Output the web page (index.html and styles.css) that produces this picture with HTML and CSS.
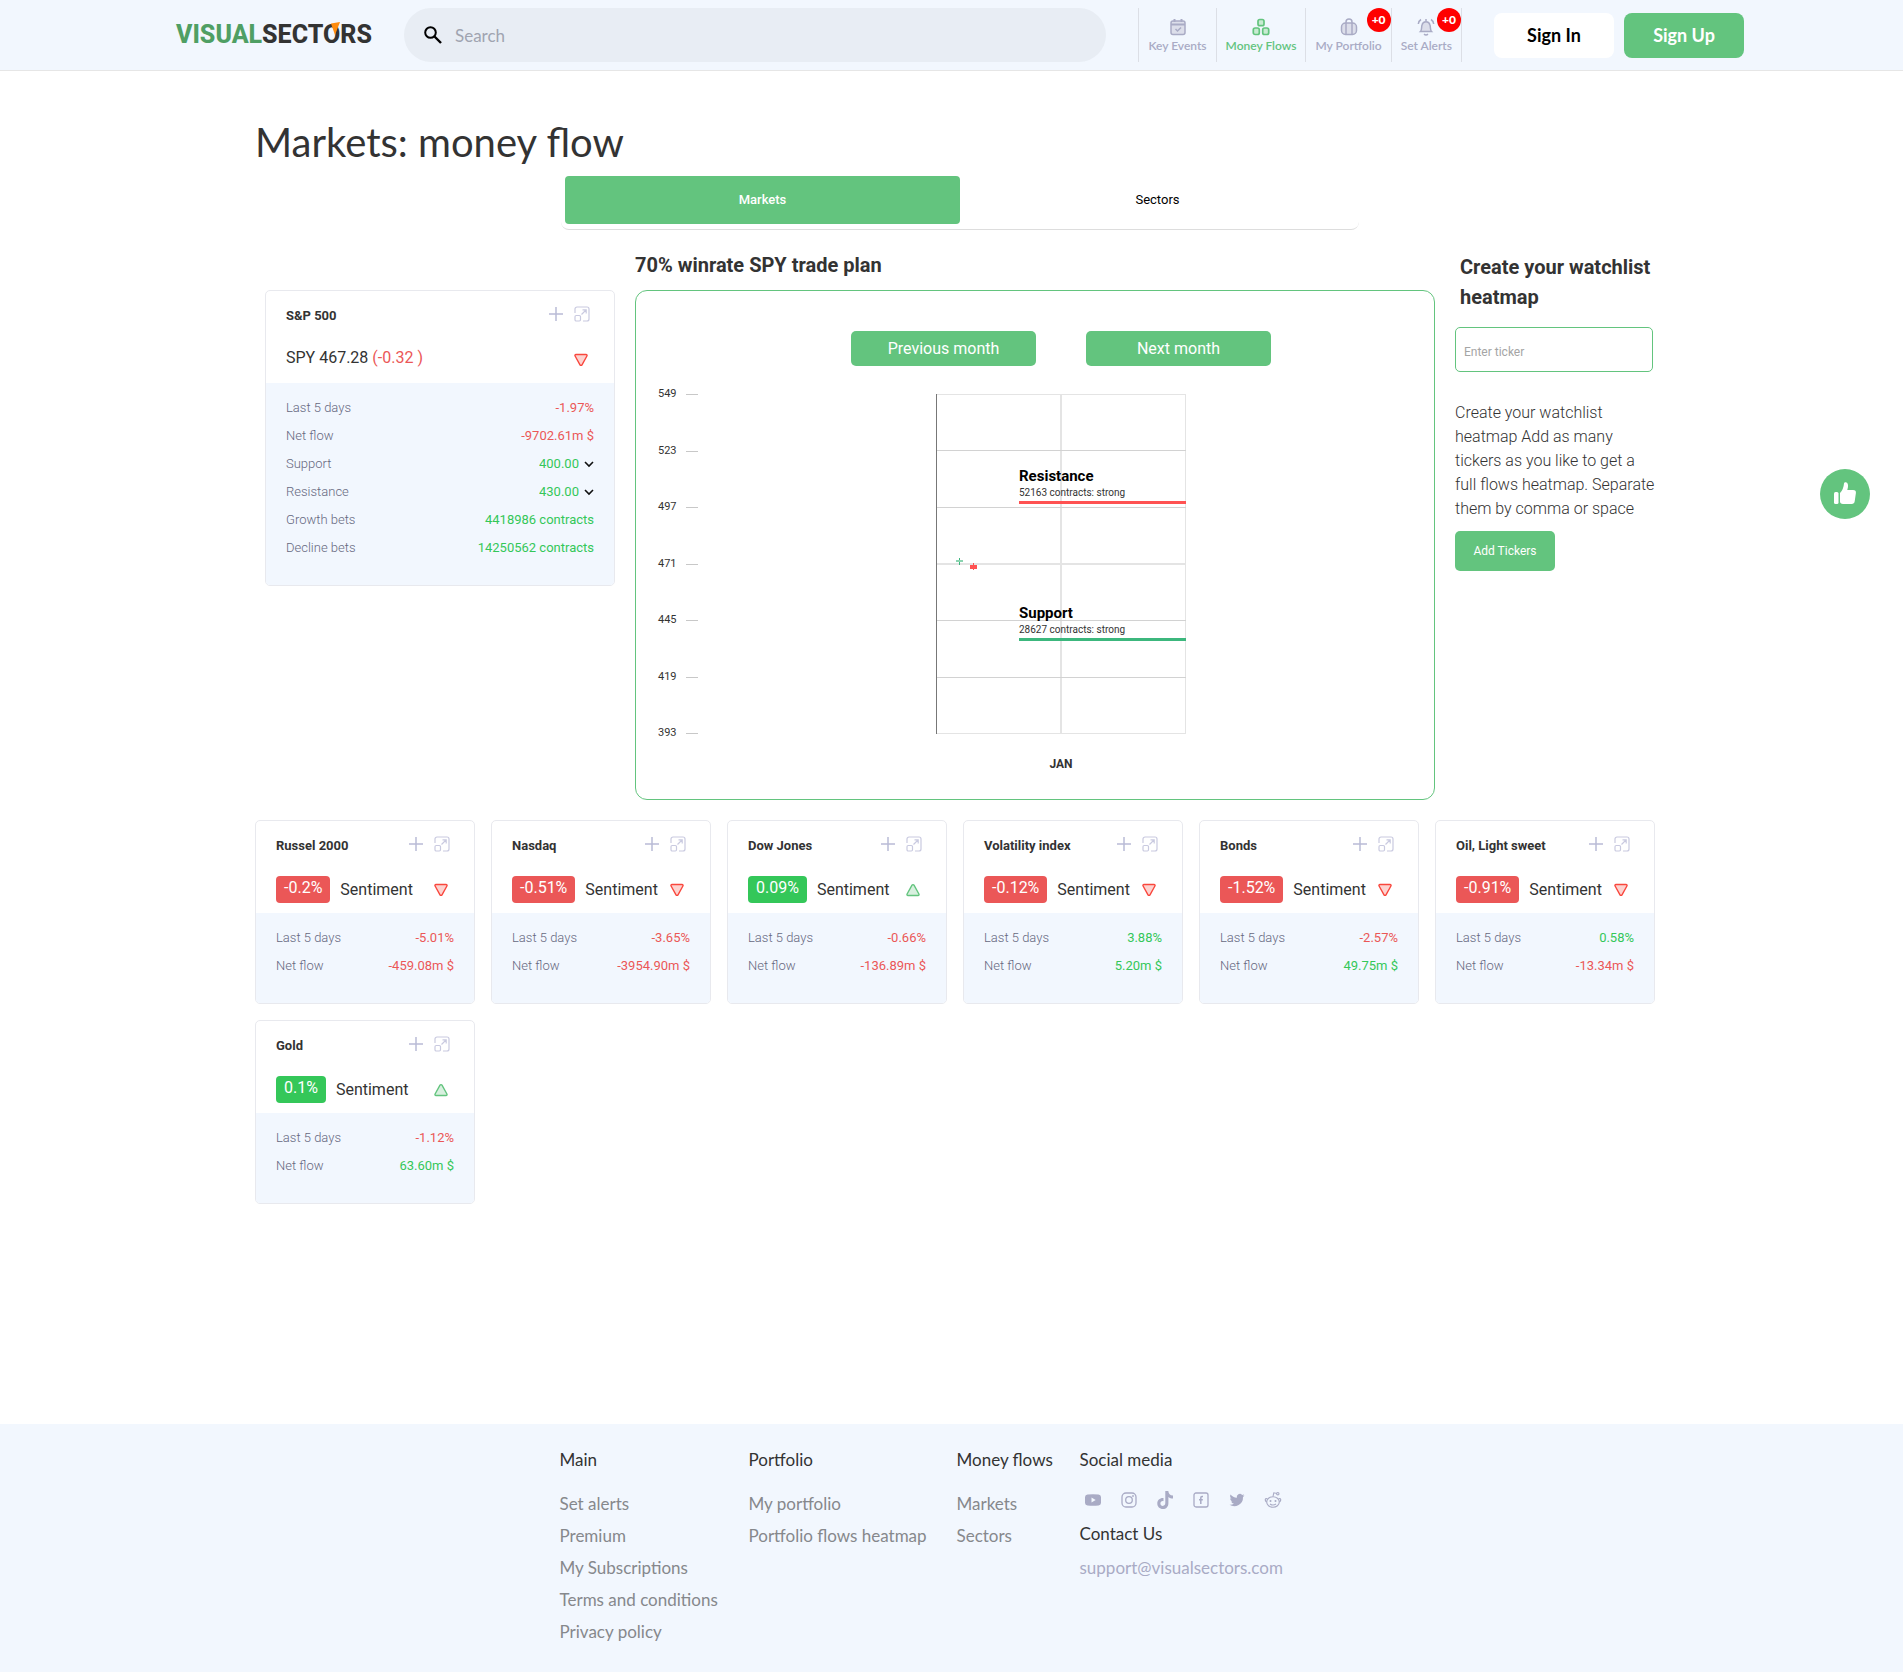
FILE: index.html
```html
<!DOCTYPE html>
<html lang="en">
<head>
    <meta charset="UTF-8">
    <meta name="viewport" content="width=device-width, initial-scale=1.0">
    <title>Markets: money flow | VisualSectors</title>
    <link rel="stylesheet" href="styles.css">
</head>
<body>
    <!-- Shared icons -->
    <svg class="icon-defs" aria-hidden="true">
        <symbol id="icon-plus" viewBox="0 0 16 16">
            <path d="M8 1v14M1 8h14" fill="none" stroke="#b9bbd6" stroke-width="1.5"/>
        </symbol>
        <symbol id="icon-expand" viewBox="0 0 16 16">
            <g fill="none" stroke="#c9cae0" stroke-width="1.2">
                <path d="M1 7V3a2 2 0 0 1 2-2h10a2 2 0 0 1 2 2v10a2 2 0 0 1-2 2H9"/>
                <rect x="1" y="9.5" width="5.5" height="5.5" rx="1.2"/>
                <path d="M7.500 8.500L12 4M8.500 3.800H12.200V7.500"/>
            </g>
        </symbol>
        <symbol id="icon-down" viewBox="0 0 14 14">
            <path d="M2 1.500h10a1 1 0 0 1 .9 1.500L8 11.800a1.150 1.150 0 0 1-2 0L1.100 3A1 1 0 0 1 2 1.500z" fill="#fdd3d0" stroke="#f9473d" stroke-width="1.400"/>
        </symbol>
        <symbol id="icon-up" viewBox="0 0 14 14">
            <path d="M2 12.500h10a1 1 0 0 0 .9-1.500L8 2.200a1.150 1.150 0 0 0-2 0L1.100 11a1 1 0 0 0 .9 1.500z" fill="#d8f0df" stroke="#63c47e" stroke-width="1.400"/>
        </symbol>
        <symbol id="icon-chevron" viewBox="0 0 10 10">
            <path d="M1 3l4 4 4-4" fill="none" stroke="#111" stroke-width="1.600"/>
        </symbol>
    </svg>

    <header class="header">
        <div class="header-inner">
            <a href="#" class="logo"><span class="logo-green">VISUAL</span>SECTORS
                <svg class="logo-mark" viewBox="0 0 9 13" aria-hidden="true"><path d="M0 1.500L9 0 4 13z" fill="#ff8c0f"/></svg>
            </a>
            <form class="search">
                <svg viewBox="0 0 18 18" aria-hidden="true"><circle cx="6.500" cy="6.500" r="5.300" fill="none" stroke="#000" stroke-width="2"/><path d="M10.500 10.500L17 17" stroke="#000" stroke-width="2.400"/></svg>
                <input type="search" placeholder="Search" aria-label="Search">
            </form>
            <nav class="nav">
                <a href="#">
                    <svg viewBox="0 0 18 18" aria-hidden="true"><rect x="2" y="3" width="14" height="13.500" rx="2" fill="#dcdeea" stroke="#a9abc5" stroke-width="1.500"/><path d="M2 6.500h14M5.500 1v3M12.500 1v3" stroke="#a9abc5" stroke-width="2"/><path d="M6.500 11l2 2 3.500-3.500" fill="none" stroke="#a9abc5" stroke-width="1.500"/></svg>
                    Key Events
                </a>
                <a href="#" class="active">
                    <svg viewBox="0 0 18 18" aria-hidden="true"><g fill="#c8ebd2" stroke="#63c47e" stroke-width="1.700"><rect x="6" y="1.500" width="6" height="6.200" rx="1.800"/><rect x="1.300" y="10" width="6" height="6.500" rx="1.800"/><rect x="10.700" y="10" width="6" height="6.500" rx="1.800"/></g></svg>
                    Money Flows
                </a>
                <a href="#">
                    <svg viewBox="0 0 18 18" aria-hidden="true"><g fill="none" stroke="#a9abc5" stroke-width="1.500"><rect x="1.500" y="5" width="15" height="11.500" rx="4" fill="#dcdeea"/><path d="M6 5V4a3 3 0 0 1 6 0v1M6 5v11.500M12 5v11.500"/></g></svg>
                    My Portfolio
                    <span class="badge">+0</span>
                </a>
                <a href="#">
                    <svg viewBox="0 0 18 18" aria-hidden="true"><g fill="none" stroke="#a9abc5" stroke-width="1.500"><path d="M3.500 13.500c1.500-1.500.8-4 1.500-6.500a4.100 4.100 0 0 1 8 0c.7 2.500 0 5 1.500 6.500z" fill="#dcdeea"/><path d="M7 16.200q2 1.600 4 0M4 1.500Q1.500 3 1.300 6M14 1.500Q16.500 3 16.700 6M9 1v2"/></g></svg>
                    Set Alerts
                    <span class="badge">+0</span>
                </a>
            </nav>
            <div class="auth">
                <button type="button" class="sign-in">Sign In</button>
                <button type="button" class="sign-up">Sign Up</button>
            </div>
        </div>
    </header>

    <main class="main">
        <h1>Markets: money flow</h1>
        <div class="tabs-wrap">
            <div class="tabs">
                <button type="button" class="active">Markets</button>
                <button type="button">Sectors</button>
            </div>
        </div>

        <div class="overview">
            <section class="overview-spy">
                <article class="card">
                    <div class="card-head">
                        <div class="card-title">
                            <h3>S&amp;P 500</h3>
                            <button type="button" aria-label="Add S&amp;P 500"><svg><use href="#icon-plus"/></svg></button>
                            <button type="button" aria-label="Expand S&amp;P 500"><svg><use href="#icon-expand"/></svg></button>
                        </div>
                        <div class="card-quote">
                            <span class="price">SPY 467.28 <span class="red">(-0.32 )</span></span>
                            <svg><use href="#icon-down"/></svg>
                        </div>
                    </div>
                    <dl class="stats">
                        <div><dt>Last 5 days</dt><dd class="red">-1.97%</dd></div>
                        <div><dt>Net flow</dt><dd class="red">-9702.61m $</dd></div>
                        <div><dt><label for="support">Support</label></dt><dd class="green"><select id="support"><option>400.00</option></select><svg><use href="#icon-chevron"/></svg></dd></div>
                        <div><dt><label for="resistance">Resistance</label></dt><dd class="green"><select id="resistance"><option>430.00</option></select><svg><use href="#icon-chevron"/></svg></dd></div>
                        <div><dt>Growth bets</dt><dd class="green">4418986 contracts</dd></div>
                        <div><dt>Decline bets</dt><dd class="green">14250562 contracts</dd></div>
                    </dl>
                </article>
            </section>

            <section class="overview-plan">
                <h2>70% winrate SPY trade plan</h2>
                <div class="plan">
                    <svg class="axis" viewBox="0 0 62 342" aria-hidden="true">
                        <g class="axis-labels">
                            <text x="22" y="5">549</text>
                            <text x="22" y="62">523</text>
                            <text x="22" y="118">497</text>
                            <text x="22" y="175">471</text>
                            <text x="22" y="231">445</text>
                            <text x="22" y="288">419</text>
                            <text x="22" y="344">393</text>
                        </g>
                        <path d="M50 2.500h12M50 59.500h12M50 115.500h12M50 172.500h12M50 228.500h12M50 285.500h12M50 341.500h12" stroke="#c8c8c8"/>
                    </svg>
                    <div class="plan-body">
                        <div class="months">
                            <button type="button">Previous month</button>
                            <button type="button">Next month</button>
                        </div>
                        <svg class="plot" viewBox="0 0 250 342">
                            <path d="M0 2.500h250M0 341.500h250M249.500 2v340" stroke="#e4e4e4"/>
                            <path d="M0 172h250M125 2v340" stroke="#e4e4e4" stroke-width="2"/>
                            <path d="M0 58.500h250M0 115.500h250M0 228.500h250M0 285.500h250" stroke="#d2d2d2"/>
                            <path d="M.500 2v340" stroke="#777"/>
                            <!-- candles -->
                            <path d="M23.500 166v7" stroke="#3cb77d"/>
                            <path d="M20 169h7" stroke="#8ad4b0" stroke-width="2"/>
                            <path d="M37.500 171v7" stroke="#ff5252"/>
                            <path d="M34 175h7" stroke="#ff5252" stroke-width="4"/>
                            <!-- levels -->
                            <path d="M83 110.500h167" stroke="#ff5252" stroke-width="3"/>
                            <path d="M83 247.500h167" stroke="#3cb77d" stroke-width="3"/>
                            <text class="level-name" x="83" y="89">Resistance</text>
                            <text class="level-note" x="83" y="104">52163 contracts: strong</text>
                            <text class="level-name" x="83" y="226">Support</text>
                            <text class="level-note" x="83" y="241">28627 contracts: strong</text>
                        </svg>
                        <div class="month-name">JAN</div>
                    </div>
                </div>
            </section>

            <section class="overview-watchlist">
                <h2>Create your watchlist heatmap</h2>
                <input type="text" placeholder="Enter ticker" aria-label="Enter ticker">
                <p>Create your watchlist heatmap Add as many tickers as you like to get a full flows heatmap. Separate them by comma or space</p>
                <button type="button">Add Tickers</button>
            </section>
        </div>

        <div class="cards">
            <article class="card">
                <div class="card-head">
                    <div class="card-title">
                        <h3>Russel 2000</h3>
                        <button type="button" aria-label="Add Russel 2000"><svg><use href="#icon-plus"/></svg></button>
                        <button type="button" aria-label="Expand Russel 2000"><svg><use href="#icon-expand"/></svg></button>
                    </div>
                    <div class="card-quote"><span class="pill pill-red">-0.2%</span>Sentiment<svg><use href="#icon-down"/></svg></div>
                </div>
                <dl class="stats">
                    <div><dt>Last 5 days</dt><dd class="red">-5.01%</dd></div>
                    <div><dt>Net flow</dt><dd class="red">-459.08m $</dd></div>
                </dl>
            </article>
            <article class="card">
                <div class="card-head">
                    <div class="card-title">
                        <h3>Nasdaq</h3>
                        <button type="button" aria-label="Add Nasdaq"><svg><use href="#icon-plus"/></svg></button>
                        <button type="button" aria-label="Expand Nasdaq"><svg><use href="#icon-expand"/></svg></button>
                    </div>
                    <div class="card-quote"><span class="pill pill-red">-0.51%</span>Sentiment<svg><use href="#icon-down"/></svg></div>
                </div>
                <dl class="stats">
                    <div><dt>Last 5 days</dt><dd class="red">-3.65%</dd></div>
                    <div><dt>Net flow</dt><dd class="red">-3954.90m $</dd></div>
                </dl>
            </article>
            <article class="card">
                <div class="card-head">
                    <div class="card-title">
                        <h3>Dow Jones</h3>
                        <button type="button" aria-label="Add Dow Jones"><svg><use href="#icon-plus"/></svg></button>
                        <button type="button" aria-label="Expand Dow Jones"><svg><use href="#icon-expand"/></svg></button>
                    </div>
                    <div class="card-quote"><span class="pill pill-green">0.09%</span>Sentiment<svg><use href="#icon-up"/></svg></div>
                </div>
                <dl class="stats">
                    <div><dt>Last 5 days</dt><dd class="red">-0.66%</dd></div>
                    <div><dt>Net flow</dt><dd class="red">-136.89m $</dd></div>
                </dl>
            </article>
            <article class="card">
                <div class="card-head">
                    <div class="card-title">
                        <h3>Volatility index</h3>
                        <button type="button" aria-label="Add Volatility index"><svg><use href="#icon-plus"/></svg></button>
                        <button type="button" aria-label="Expand Volatility index"><svg><use href="#icon-expand"/></svg></button>
                    </div>
                    <div class="card-quote"><span class="pill pill-red">-0.12%</span>Sentiment<svg><use href="#icon-down"/></svg></div>
                </div>
                <dl class="stats">
                    <div><dt>Last 5 days</dt><dd class="green">3.88%</dd></div>
                    <div><dt>Net flow</dt><dd class="green">5.20m $</dd></div>
                </dl>
            </article>
            <article class="card">
                <div class="card-head">
                    <div class="card-title">
                        <h3>Bonds</h3>
                        <button type="button" aria-label="Add Bonds"><svg><use href="#icon-plus"/></svg></button>
                        <button type="button" aria-label="Expand Bonds"><svg><use href="#icon-expand"/></svg></button>
                    </div>
                    <div class="card-quote"><span class="pill pill-red">-1.52%</span>Sentiment<svg><use href="#icon-down"/></svg></div>
                </div>
                <dl class="stats">
                    <div><dt>Last 5 days</dt><dd class="red">-2.57%</dd></div>
                    <div><dt>Net flow</dt><dd class="green">49.75m $</dd></div>
                </dl>
            </article>
            <article class="card">
                <div class="card-head">
                    <div class="card-title">
                        <h3>Oil, Light sweet</h3>
                        <button type="button" aria-label="Add Oil"><svg><use href="#icon-plus"/></svg></button>
                        <button type="button" aria-label="Expand Oil"><svg><use href="#icon-expand"/></svg></button>
                    </div>
                    <div class="card-quote"><span class="pill pill-red">-0.91%</span>Sentiment<svg><use href="#icon-down"/></svg></div>
                </div>
                <dl class="stats">
                    <div><dt>Last 5 days</dt><dd class="green">0.58%</dd></div>
                    <div><dt>Net flow</dt><dd class="red">-13.34m $</dd></div>
                </dl>
            </article>
            <article class="card">
                <div class="card-head">
                    <div class="card-title">
                        <h3>Gold</h3>
                        <button type="button" aria-label="Add Gold"><svg><use href="#icon-plus"/></svg></button>
                        <button type="button" aria-label="Expand Gold"><svg><use href="#icon-expand"/></svg></button>
                    </div>
                    <div class="card-quote"><span class="pill pill-green">0.1%</span>Sentiment<svg><use href="#icon-up"/></svg></div>
                </div>
                <dl class="stats">
                    <div><dt>Last 5 days</dt><dd class="red">-1.12%</dd></div>
                    <div><dt>Net flow</dt><dd class="green">63.60m $</dd></div>
                </dl>
            </article>
        </div>
    </main>

    <footer class="footer">
        <div class="footer-inner">
            <div class="footer-col">
                <h4>Main</h4>
                <a href="#">Set alerts</a>
                <a href="#">Premium</a>
                <a href="#">My Subscriptions</a>
                <a href="#">Terms and conditions</a>
                <a href="#">Privacy policy</a>
            </div>
            <div class="footer-col">
                <h4>Portfolio</h4>
                <a href="#">My portfolio</a>
                <a href="#">Portfolio flows heatmap</a>
            </div>
            <div class="footer-col">
                <h4>Money flows</h4>
                <a href="#">Markets</a>
                <a href="#">Sectors</a>
            </div>
            <div class="footer-contact">
                <h4>Social media</h4>
                <div class="social">
                    <a href="#" aria-label="YouTube"><svg viewBox="0 0 18 18"><path d="M3.500 3.500Q9 3 14.500 3.500 16.800 3.700 17 6v6q-.2 2.300-2.500 2.500Q9 15 3.500 14.500 1.200 14.300 1 12V6q.2-2.300 2.500-2.500z" fill="#a9abc5"/><path d="M7.500 6.500v5l4.200-2.500z" fill="#f2f7fe"/></svg></a>
                    <a href="#" aria-label="Instagram"><svg viewBox="0 0 18 18"><g fill="none" stroke="#a9abc5" stroke-width="1.300"><rect x="2" y="2" width="14" height="14" rx="4"/><circle cx="9" cy="9" r="3.300"/></g><circle cx="13" cy="5" r=".9" fill="#a9abc5"/></svg></a>
                    <a href="#" aria-label="TikTok"><svg viewBox="0 0 18 18"><path d="M9.300 0h3c.2 2.700 1.700 4.300 4.700 4.600v3c-1.800 0-3.300-.5-4.600-1.500v6.100c0 3.500-2.300 5.800-5.500 5.800-3.300 0-5.600-2.400-5.600-5.500 0-3.400 2.700-5.800 6.200-5.500v3.200c-1.800-.4-3.100.7-3.100 2.300 0 1.400 1 2.400 2.400 2.400 1.500 0 2.500-1 2.500-2.800z" fill="#a9abc5"/></svg></a>
                    <a href="#" aria-label="Facebook"><svg viewBox="0 0 18 18"><g fill="none" stroke="#a9abc5"><rect x="2" y="2" width="14" height="14" rx="2" stroke-width="1.300"/><path d="M11 5.500H10q-1.200 0-1.200 1.300V13M7 8.700h3.800" stroke-width="1.500"/></g></svg></a>
                    <a href="#" aria-label="Twitter"><svg viewBox="0 0 24 24"><path d="M22 5.900c-.7.300-1.500.5-2.400.6.900-.5 1.500-1.300 1.800-2.300-.8.500-1.700.8-2.600 1A4.100 4.100 0 0 0 11.800 9C8.400 8.800 5.400 7.200 3.400 4.700c-1.100 1.900-.6 4.300 1.300 5.500-.7 0-1.300-.2-1.900-.5 0 2 1.400 3.700 3.300 4.100-.6.200-1.200.2-1.900.1.500 1.600 2.100 2.800 3.900 2.800A8.300 8.300 0 0 1 2 18.400 11.700 11.700 0 0 0 20 8c.8-.6 1.500-1.300 2-2.100z" fill="#a9abc5"/></svg></a>
                    <a href="#" aria-label="Reddit"><svg viewBox="0 0 18 18"><g fill="none" stroke="#a9abc5" stroke-width="1.100"><ellipse cx="9" cy="11" rx="6.300" ry="5.300"/><path d="M3.500 8C1.500 6.500.2 9 2.500 11M14.500 8c2-1.500 3.300 1 1 3M9 5.500l.8-3.700 3.200.7M6 13q3 2 6 0"/><circle cx="13.800" cy="2.700" r="1.200"/></g><circle cx="6.500" cy="10" r="1" fill="#a9abc5"/><circle cx="11.500" cy="10" r="1" fill="#a9abc5"/></svg></a>
                </div>
                <h4>Contact Us</h4>
                <a href="#" class="mail">support@visualsectors.com</a>
            </div>
        </div>
    </footer>

    <button type="button" class="feedback" aria-label="Feedback">
        <svg viewBox="0 0 24 24"><rect x="1" y="11" width="4.500" height="12" rx="1.500" fill="#fff"/><path d="M7 12q3.500-3.500 4-9.500C11.200.9 14.500.3 15 4c.1 2-.3 3.500-.7 5H20c2.200 0 3.200 1.200 2.900 3l-1.200 8.300c-.3 1.700-1.200 2.700-3 2.700H10c-2 0-3-1-3-2.500z" fill="#fff"/></svg>
    </button>
</body>
</html>
```

FILE: styles.css
```css
/* General */
* {
    box-sizing: border-box;
}

body {
    margin: 0;
    font-family: Roboto, Arial, sans-serif;
    font-size: 16px;
    color: #333;
    background-color: #fff;
}

h1, h2, h3, h4, p, dl, dd {
    margin: 0;
}

a {
    color: inherit;
    text-decoration: none;
}

button {
    padding: 0;
    border: none;
    background: none;
    color: #000;
    font-family: inherit;
    cursor: pointer;
}

.icon-defs {
    display: none;
}

.red {
    color: #eb5757;
}

.green {
    color: #34c759;
}

/* Header */
.header {
    background-color: #f2f7fe;
    border-bottom: 1px solid #e6e6e6;
    font-family: Lato, sans-serif;
}

.header-inner {
    display: flex;
    align-items: center;
    max-width: 1585px;
    height: 70px;
    margin: 0 auto;
    padding-left: 17px;
}

.logo {
    position: relative;
    width: 196px;
    margin-right: 32px;
    font-family: Roboto, sans-serif;
    font-size: 25px;
    font-weight: 800;
    line-height: 36px;
    white-space: nowrap;
}

.logo-green {
    color: #4f9f64;
}

.logo-mark {
    position: absolute;
    top: 5px;
    right: 32px;
    width: 9px;
    height: 13px;
}

.search {
    display: flex;
    flex: 1;
    align-items: center;
    gap: 13px;
    height: 54px;
    padding: 0 20px;
    border-radius: 27px;
    background-color: #e8edf4;
}

.search svg {
    width: 18px;
    height: 18px;
}

.search input {
    flex: 1;
    padding: 0;
    border: none;
    outline: none;
    background: none;
    font-family: inherit;
    font-size: 17px;
}

.search input::placeholder {
    color: #a0a4b0;
}

.nav {
    display: flex;
    height: 54px;
    margin: 0 32px;
    border-left: 1px solid #dcdfe6;
}

.nav a {
    position: relative;
    display: flex;
    flex-direction: column;
    align-items: center;
    padding: 10px 9px 0;
    border-right: 1px solid #dcdfe6;
    color: #a9abc5;
    font-size: 12px;
    font-weight: 600;
    line-height: 20px;
}

.nav svg {
    width: 18px;
    height: 18px;
}

.nav .active {
    color: #63c47e;
}

.badge {
    position: absolute;
    top: 0;
    right: 0;
    width: 24px;
    height: 24px;
    border-radius: 50%;
    background-color: #f00;
    color: #fff;
    font-weight: 900;
    line-height: 24px;
    text-align: center;
}

.auth {
    display: flex;
    gap: 10px;
}

.auth button {
    width: 120px;
    height: 45px;
    border-radius: 8px;
    font-size: 18px;
    font-weight: 700;
}

.auth .sign-in {
    background-color: #fff;
}

.auth .sign-up {
    background-color: #63c47e;
    color: #fff;
}

/* Main */
.main {
    max-width: 1407px;
    margin: 0 auto;
    padding: 47px 0 220px 7px;
}

h1 {
    margin-bottom: 10px;
    font-family: Lato, sans-serif;
    font-size: 40px;
    font-weight: 400;
    line-height: 48px;
}

.tabs-wrap {
    padding-left: 10px;
}

.tabs {
    display: flex;
    max-width: 798px;
    margin: 0 auto 20px;
    padding: 0 4px 5px;
    border-bottom: 1px solid #ddd;
    border-radius: 8px;
}

.tabs button {
    flex: 1;
    height: 48px;
    border-radius: 4px;
    font-size: 13px;
    font-weight: 400;
    line-height: 18px;
}

.tabs .active {
    background-color: #63c47e;
    color: #fff;
    font-weight: 500;
}

.overview {
    display: grid;
    grid-template-columns: 370px 1fr 210px;
    margin-bottom: 20px;
}

.overview h2 {
    font-size: 20px;
    font-weight: 700;
    line-height: 30px;
}

.overview-spy {
    padding: 40px 10px 0;
}

.overview-plan {
    padding: 0 10px;
}

/* Trade plan chart */
.plan {
    display: flex;
    height: 510px;
    margin-top: 10px;
    padding: 40px 10px 0 0;
    border: 1px solid #63c47e;
    border-radius: 12px;
}

.axis {
    width: 62px;
    height: 342px;
    margin-top: 61px;
    overflow: visible;
}

.axis-labels {
    fill: #333;
    font-size: 11px;
}

.plan-body {
    display: flex;
    flex: 1;
    flex-direction: column;
    align-items: center;
}

.months {
    display: flex;
    gap: 50px;
    margin-bottom: 26px;
}

.months button {
    width: 185px;
    height: 35px;
    border-radius: 5px;
    background-color: #63c47e;
    color: #fff;
    font-size: 16px;
}

.plot {
    width: 250px;
    height: 342px;
}

.level-name {
    fill: #000;
    font-size: 15px;
    font-weight: 700;
}

.level-note {
    fill: #333;
    font-size: 10px;
}

.month-name {
    margin-top: 21px;
    font-size: 12px;
    font-weight: 700;
    line-height: 18px;
}

/* Watchlist */
.overview-watchlist {
    padding: 2px 0 0 10px;
}

.overview-watchlist h2 {
    padding-left: 5px;
}

.overview-watchlist input {
    display: block;
    width: 198px;
    height: 45px;
    margin: 15px 0 29px;
    padding: 5px 8px 0;
    border: 1px solid #63c47e;
    border-radius: 5px;
    font-family: inherit;
    font-size: 12px;
}

.overview-watchlist input::placeholder {
    color: #a5a5a5;
}

.overview-watchlist p {
    margin-bottom: 10px;
    font-weight: 300;
    line-height: 24px;
}

.overview-watchlist button {
    width: 100px;
    height: 40px;
    border-radius: 5px;
    background-color: #63c47e;
    color: #fff;
    font-size: 12px;
}

/* Cards */
.cards {
    display: grid;
    grid-template-columns: repeat(6, 1fr);
    gap: 16px;
}

.card {
    overflow: hidden;
    border: 1px solid #e8e9ee;
    border-radius: 5px;
}

.card-head {
    padding: 10px 20px 10px;
}

.card-title {
    display: flex;
    align-items: center;
    gap: 10px;
    height: 28px;
    margin-bottom: 17px;
    padding-right: 4px;
}

.card-title h3 {
    flex: 1;
    font-size: 13px;
    font-weight: 700;
    white-space: nowrap;
}

.card-title button {
    height: 20px;
}

.card-title svg {
    width: 16px;
    height: 16px;
}

.card-quote {
    display: flex;
    align-items: center;
    gap: 10px;
    height: 27px;
    padding-right: 6px;
}

.card-quote svg {
    width: 14px;
    height: 14px;
    margin-left: auto;
}

.price {
    height: 27px;
    line-height: 24px;
}

.pill {
    height: 27px;
    padding: 0 8px;
    border-radius: 4px;
    color: #fff;
    line-height: 23px;
}

.pill-red {
    background-color: #eb5757;
}

.pill-green {
    background-color: #34c759;
}

.stats {
    padding: 11px 20px 23px;
    background-color: #f2f7fe;
    font-size: 13px;
    line-height: 28px;
}

.stats div {
    display: flex;
    justify-content: space-between;
}

.stats dt {
    color: #66687f;
    font-weight: 300;
}

.stats dd {
    display: flex;
    align-items: center;
}

.stats dd svg {
    width: 10px;
    height: 10px;
    margin-left: 5px;
}

.stats select {
    appearance: none;
    padding: 0;
    border: none;
    background: none;
    color: inherit;
    font: inherit;
    line-height: 20px;
}

/* Footer */
.footer {
    background-color: #f2f7fe;
    font-family: Lato, sans-serif;
    font-size: 17px;
}

.footer-inner {
    display: grid;
    grid-template-columns: 157px 176px 91px 264px;
    gap: 32px;
    justify-content: center;
    padding: 20px 0 24px;
    line-height: 32px;
    white-space: nowrap;
}

.footer h4 {
    font-size: 17px;
    font-weight: 400;
}

.footer-col {
    display: flex;
    flex-direction: column;
    color: #86888c;
}

.footer-col h4 {
    margin-bottom: 12px;
    color: #333;
}

.social {
    display: flex;
    gap: 18px;
    padding: 15px 4px 9px;
}

.social a, .social svg {
    display: block;
    width: 18px;
    height: 18px;
}

.mail {
    display: block;
    padding-top: 2px;
    color: #a9abc5;
}

/* Feedback bubble */
.feedback {
    position: fixed;
    top: 469px;
    right: 33px;
    width: 50px;
    height: 50px;
    border-radius: 50%;
    background-color: #63c47e;
}

.feedback svg {
    width: 24px;
    height: 24px;
}
```
